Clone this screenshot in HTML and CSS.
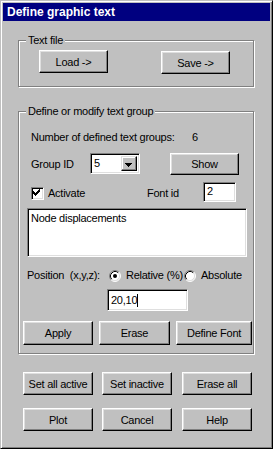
FILE: index.html
```html
<!DOCTYPE html>
<html>
<head>
<meta charset="utf-8">
<link rel="stylesheet" href="styles.css">
</head>
<body>
<div class="window">
  <div class="titlebar">Define graphic text</div>
  <div class="body">
    <fieldset class="group g1">
      <legend>Text file</legend>
      <div class="file-row">
        <button class="btn btn-file">Load -&gt;</button>
        <button class="btn btn-file btn-save">Save -&gt;</button>
      </div>
    </fieldset>

    <fieldset class="group g2">
      <legend>Define or modify text group</legend>
      <div class="count-row">
        <span class="count-label">Number of defined text groups:</span>
        <span>6</span>
      </div>
      <div class="id-row">
        <span class="id-label">Group ID</span>
        <div class="combo">
          <span class="combo-val">5</span>
          <span class="combo-btn">
            <svg width="14" height="15" viewBox="0 0 14 15"><path d="M3 6h7v1h-7z M4 7h5v1h-5z M5 8h3v1h-3z M6 9h1v1h-1z" fill="#000"/></svg>
          </span>
        </div>
        <button class="btn btn-show">Show</button>
      </div>
      <div class="act-row">
        <span class="check">
          <svg width="9" height="9" viewBox="0 0 9 9"><path d="M7 1h1v1h-1z M6 2h2v1h-2z M1 3h1v1h-1z M5 3h3v1h-3z M1 4h2v1h-2z M4 4h3v1h-3z M1 5h5v1h-5z M2 6h3v1h-3z M3 7h1v1h-1z" fill="#000"/></svg>
        </span>
        <span class="act-label">Activate</span>
        <span class="font-label">Font id</span>
        <div class="field font-input">2</div>
      </div>
      <div class="field textbox">Node displacements</div>
      <div class="pos-row">
        <span class="pos-label">Position  (x,y,z):</span>
        <svg class="radio" width="12" height="12" viewBox="0 0 12 12">
          <circle cx="6" cy="6" r="5" fill="#fff"/>
          <path d="M2.11 9.89 A5.5 5.5 0 0 1 9.89 2.11" stroke="#808080" fill="none"/>
          <path d="M9.89 2.11 A5.5 5.5 0 0 1 2.11 9.89" stroke="#fff" fill="none"/>
          <path d="M2.82 9.18 A4.5 4.5 0 0 1 9.18 2.82" stroke="#000" fill="none"/>
          <path d="M9.18 2.82 A4.5 4.5 0 0 1 2.82 9.18" stroke="#dfdfdf" fill="none"/>
          <circle cx="6" cy="6" r="2" fill="#000"/>
        </svg>
        <span class="rel-label">Relative (%)</span>
        <svg class="radio" width="12" height="12" viewBox="0 0 12 12">
          <circle cx="6" cy="6" r="5" fill="#fff"/>
          <path d="M2.11 9.89 A5.5 5.5 0 0 1 9.89 2.11" stroke="#808080" fill="none"/>
          <path d="M9.89 2.11 A5.5 5.5 0 0 1 2.11 9.89" stroke="#fff" fill="none"/>
          <path d="M2.82 9.18 A4.5 4.5 0 0 1 9.18 2.82" stroke="#000" fill="none"/>
          <path d="M9.18 2.82 A4.5 4.5 0 0 1 2.82 9.18" stroke="#dfdfdf" fill="none"/>
        </svg>
        <span class="abs-label">Absolute</span>
      </div>
      <div class="field pos-input"><span>20,10</span><span class="caret"></span></div>
      <div class="apply-row">
        <button class="btn btn-apply">Apply</button>
        <button class="btn btn-erase">Erase</button>
        <button class="btn btn-font">Define Font</button>
      </div>
    </fieldset>

    <div class="bottom-row first">
      <button class="btn btn-bottom">Set all active</button>
      <button class="btn btn-bottom mid">Set inactive</button>
      <button class="btn btn-bottom last">Erase all</button>
    </div>
    <div class="bottom-row second">
      <button class="btn btn-bottom">Plot</button>
      <button class="btn btn-bottom mid">Cancel</button>
      <button class="btn btn-bottom last">Help</button>
    </div>
  </div>
</div>
</body>
</html>
```

FILE: styles.css
```css
html, body {
  margin: 0;
  padding: 0;
  background: #c0c0c0;
}

body {
  font-family: "Liberation Sans", Arial, sans-serif;
  font-size: 11px;
  letter-spacing: -0.25px;
  color: #000;
  white-space: nowrap;
}

.window {
  width: 273px;
  height: 449px;
  box-sizing: border-box;
  border: 1px solid;
  border-color: #c0c0c0 #000 #000 #c0c0c0;
  box-shadow: inset 1px 1px #fff, inset -1px -1px #808080;
  padding: 2px;
  display: flex;
  flex-direction: column;
}

.titlebar {
  height: 18px;
  background: #000080;
  color: #fff;
  font-weight: bold;
  font-size: 12px;
  letter-spacing: 0;
  line-height: 18px;
  padding-left: 4px;
}

.body {
  padding: 13px 16px 0 15px;
  display: flex;
  flex-direction: column;
}

.group {
  margin: 0;
  padding: 0;
  border: 1px solid #808080;
  box-shadow: inset 1px 1px #fff, 1px 1px #fff;
  min-width: 0;
  display: flex;
  flex-direction: column;
  align-items: flex-start;
}

.group legend {
  margin-left: 7px;
  padding: 0 2px;
  height: 13px;
  line-height: 13px;
  background: #c0c0c0;
}

.g2 {
  margin-top: 18px;
}

.btn {
  box-sizing: border-box;
  margin: 0;
  padding: 0;
  height: 23px;
  font-family: "Liberation Sans", Arial, sans-serif;
  font-size: 11px;
  letter-spacing: -0.25px;
  white-space: nowrap;
  color: #000;
  background: #c0c0c0;
  border: 1px solid;
  border-color: #fff #000 #000 #fff;
  box-shadow: inset -1px -1px #808080, inset 1px 1px #dfdfdf;
  text-align: center;
}

.file-row {
  display: flex;
  align-items: flex-start;
  padding: 3px 0 12px 20px;
}

.btn-file {
  width: 69px;
}

.btn-save {
  margin-left: 53px;
  margin-top: 1px;
}

.count-row {
  display: flex;
  margin: 13px 0 0 12px;
  height: 13px;
  line-height: 13px;
}

.count-label {
  width: 161px;
}

.id-row {
  display: flex;
  align-items: flex-start;
  margin: 9px 0 0 12px;
  height: 22px;
}

.id-label {
  width: 59px;
  line-height: 22px;
}

.field {
  box-sizing: border-box;
  background: #fff;
  border: 1px solid;
  border-color: #808080 #fff #fff #808080;
  box-shadow: inset 1px 1px #000, inset -1px -1px #dfdfdf;
}

.combo {
  box-sizing: border-box;
  width: 50px;
  height: 21px;
  background: #fff;
  border: 1px solid;
  border-color: #808080 #fff #fff #808080;
  box-shadow: inset 1px 1px #000, inset -1px -1px #dfdfdf;
  display: flex;
  padding: 2px;
}

.combo-val {
  flex: 1;
  line-height: 15px;
  padding-left: 1px;
}

.combo-btn {
  box-sizing: border-box;
  width: 16px;
  height: 15px;
  background: #c0c0c0;
  border: 1px solid;
  border-color: #dfdfdf #000 #000 #dfdfdf;
  box-shadow: inset -1px -1px #808080, inset 1px 1px #fff;
  display: flex;
}

.btn-show {
  margin-left: 30px;
  width: 69px;
  height: 22px;
}

.act-row {
  display: flex;
  align-items: center;
  margin: 7px 0 0 12px;
  height: 20px;
}

.check {
  box-sizing: border-box;
  width: 13px;
  height: 13px;
  margin-top: 2px;
  background: #fff;
  border: 1px solid;
  border-color: #808080 #fff #fff #808080;
  box-shadow: inset 1px 1px #000, inset -1px -1px #dfdfdf;
  padding: 1px;
  display: flex;
}

.check svg {
  margin: -1px 0 0 -1px;
}

.act-label {
  margin-left: 4px;
  width: 99px;
  margin-top: 2px;
}

.font-label {
  width: 56px;
  margin-top: 2px;
}

.font-input {
  width: 33px;
  height: 20px;
  line-height: 16px;
  padding-left: 3px;
}

.textbox {
  margin: 6px 0 0 8px;
  width: 220px;
  height: 49px;
  padding: 3px;
  line-height: 13px;
}

.pos-row {
  display: flex;
  align-items: center;
  margin: 12px 0 0 8px;
  height: 13px;
  line-height: 13px;
}

.pos-label {
  width: 82px;
  white-space: pre;
}

.radio {
  display: block;
  flex: none;
}

.rel-label {
  margin-left: 5px;
  width: 58px;
}

.abs-label {
  margin-left: 5px;
}

.pos-input {
  margin: 7px 0 0 88px;
  width: 81px;
  height: 22px;
  padding-left: 3px;
  display: flex;
  align-items: center;
}

.caret {
  width: 1px;
  height: 13px;
  background: #000;
}

.apply-row {
  display: flex;
  margin: 10px 0 8px 4px;
}

.apply-row .btn {
  height: 24px;
}

.btn-apply {
  width: 70px;
}

.btn-erase {
  width: 71px;
  margin-left: 6px;
}

.btn-font {
  width: 76px;
  margin-left: 6px;
}

.bottom-row {
  display: flex;
  margin-left: 5px;
}

.bottom-row.first {
  margin-top: 18px;
}

.bottom-row.second {
  margin-top: 13px;
}

.btn-bottom {
  width: 70px;
}

.btn-bottom.mid {
  margin-left: 9px;
}

.btn-bottom.last {
  margin-left: 10px;
}
```
